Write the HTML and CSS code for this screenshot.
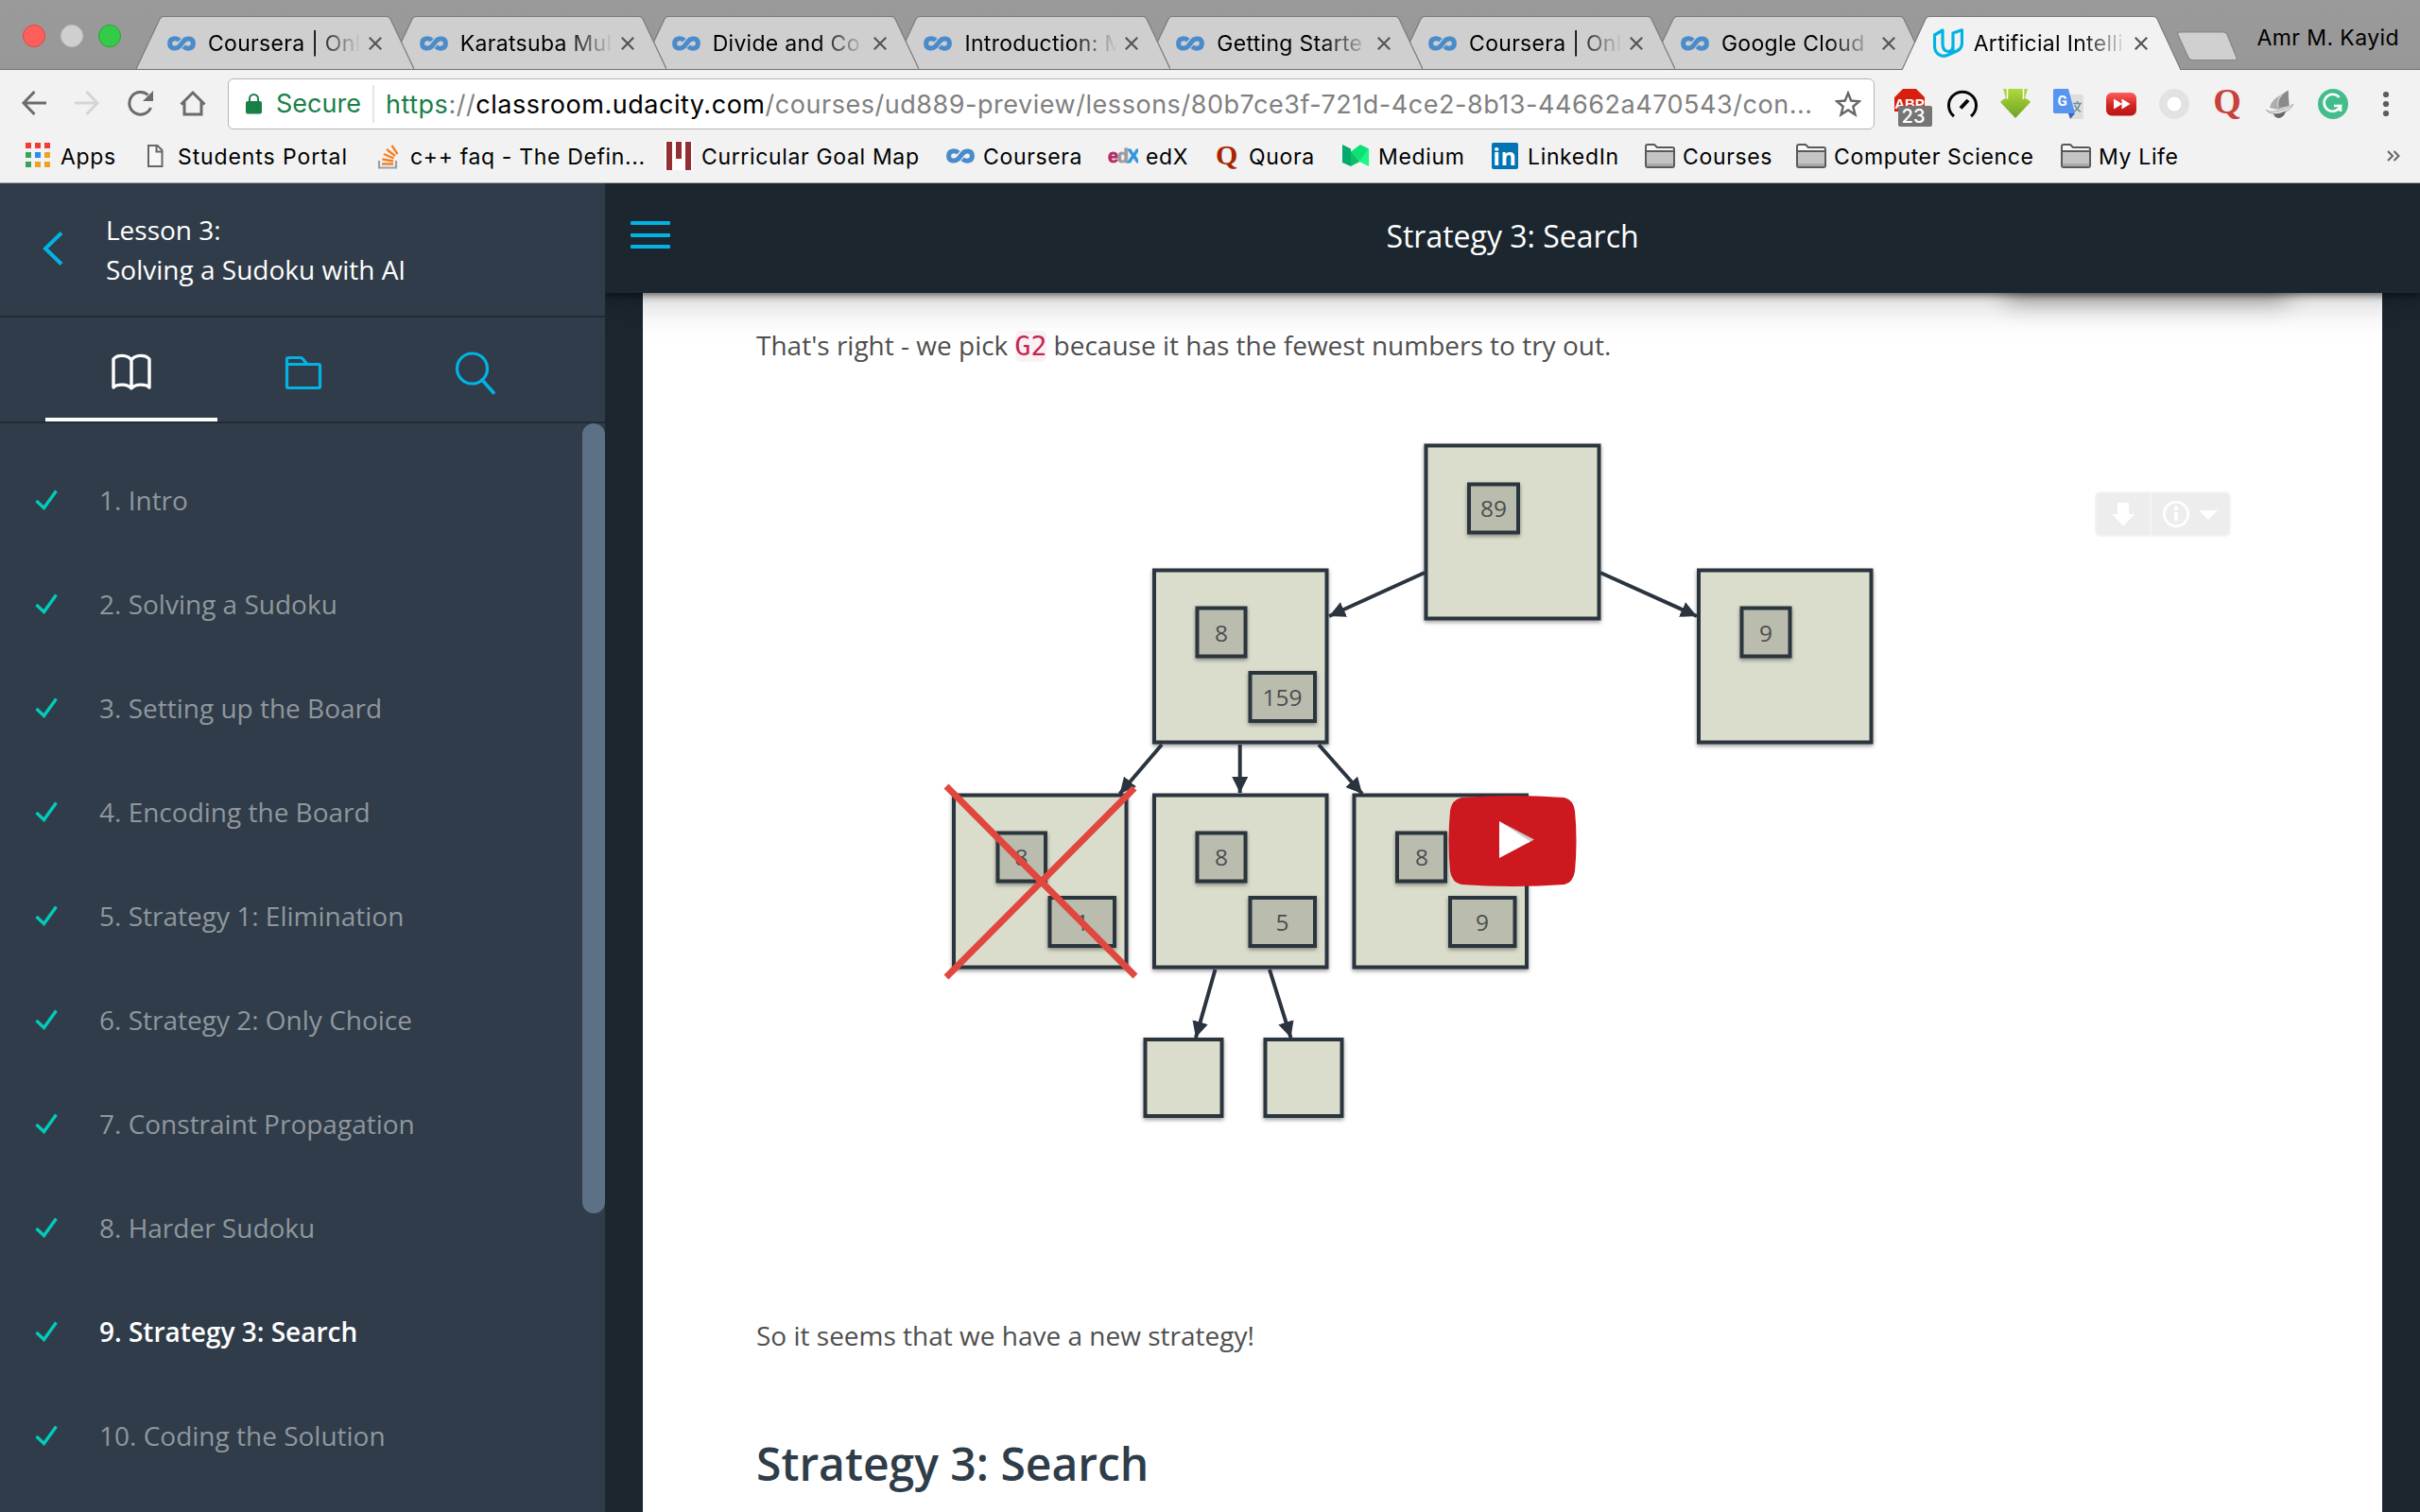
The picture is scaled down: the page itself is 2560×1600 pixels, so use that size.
FILE: index.html
```html
<!DOCTYPE html>
<html lang="en">
<head>
<meta charset="utf-8">
<title>Artificial Intelligence - Udacity</title>
<link rel="stylesheet" href="styles.css">
</head>
<body>
<svg class="defs" aria-hidden="true">
  <symbol id="tab-shape" viewBox="0 0 294 57"><path d="M0 56 L25 3 Q26.500 .5 29 .5 H265 Q267.500 .5 269 3 L294 56" fill="#cfcfcf" stroke="#7b7b7b" stroke-width="1.200"/></symbol>
  <symbol id="coursera" viewBox="0 0 30 16"><path d="M12.800 4.800C10.500 2.300 2.600 1.200 2.600 8S10 13.700 13 10.900L17.300 5.400C20 2.200 27.400 1.500 27.400 8S20 13.900 17.200 11.200" fill="none" stroke="#4a8ccb" stroke-width="5"/></symbol>
  <symbol id="close" viewBox="0 0 14 14"><path d="M.8 .8 13.200 13.200M13.200 .8 .8 13.200" stroke="#555" stroke-width="2.200" fill="none"/></symbol>
  <symbol id="folder" viewBox="0 0 32 26"><path d="M1 23V3Q1 1 3 1H10L13 4H29Q31 4 31 6V23Q31 25 29 25H3Q1 25 1 23Z" fill="#f7f7f7" stroke="#5a5a5a" stroke-width="2"/><path d="M2 9H30V24H2Z" fill="#c4c4c4"/><path d="M2 21H30V24H2Z" fill="#aaa"/><path d="M1 8H31" stroke="#5a5a5a" stroke-width="2"/></symbol>
  <symbol id="check" viewBox="0 0 24 22"><path d="M1.500 12 9.500 19.500 22.500 1.500" fill="none" stroke="#02ccba" stroke-width="3.400"/></symbol>
</svg>

<div class="browser">
  <div class="tabstrip">
    <div class="lights"><i class="light red"></i><i class="light gray"></i><i class="light green"></i></div>
    <div class="tabs">
      <div class="tab t1"><svg class="shape"><use href="#tab-shape"/></svg><svg class="fav"><use href="#coursera"/></svg><span class="tab-title">Coursera | Onl</span><svg class="x"><use href="#close"/></svg></div>
      <div class="tab t2"><svg class="shape"><use href="#tab-shape"/></svg><svg class="fav"><use href="#coursera"/></svg><span class="tab-title">Karatsuba Mul</span><svg class="x"><use href="#close"/></svg></div>
      <div class="tab t3"><svg class="shape"><use href="#tab-shape"/></svg><svg class="fav"><use href="#coursera"/></svg><span class="tab-title">Divide and Co</span><svg class="x"><use href="#close"/></svg></div>
      <div class="tab t4"><svg class="shape"><use href="#tab-shape"/></svg><svg class="fav"><use href="#coursera"/></svg><span class="tab-title">Introduction: M</span><svg class="x"><use href="#close"/></svg></div>
      <div class="tab t5"><svg class="shape"><use href="#tab-shape"/></svg><svg class="fav"><use href="#coursera"/></svg><span class="tab-title">Getting Starte</span><svg class="x"><use href="#close"/></svg></div>
      <div class="tab t6"><svg class="shape"><use href="#tab-shape"/></svg><svg class="fav"><use href="#coursera"/></svg><span class="tab-title">Coursera | Onl</span><svg class="x"><use href="#close"/></svg></div>
      <div class="tab t7"><svg class="shape"><use href="#tab-shape"/></svg><svg class="fav"><use href="#coursera"/></svg><span class="tab-title">Google Cloud</span><svg class="x"><use href="#close"/></svg></div>
      <div class="tab t8"><svg class="shape" viewBox="0 0 294 57"><path d="M0 57 L25 3 Q26.500 .5 29 .5 H266 Q268.500 .5 270 3 L295 57" fill="#f2f2f2" stroke="#7b7b7b" stroke-width="1.200"/></svg><svg class="fav udacity" viewBox="0 0 32 32"><path d="M1.500 7 10 2V16Q10 24.500 16 24.500C19 24.500 21 22 21 18V5L30.500 1.800V16Q30 22 25 24L16 28Q10 31 5 27Q1.500 24 1.500 19ZM21 18V26" fill="none" stroke="#01b3e3" stroke-width="3.200" stroke-linejoin="round"/></svg><span class="tab-title">Artificial Intelli</span><svg class="x"><use href="#close"/></svg></div>
    </div>
    <svg class="newtab" viewBox="0 0 66 32"><path d="M4 1H50Q52.500 1 54 3.500L64 28Q65 30.500 62.500 30.500H17Q14 30.500 13 28L2 4Q1 1 4 1Z" fill="#d0d0d0" stroke="#858585" stroke-width="1.200"/></svg>
    <span class="user">Amr M. Kayid</span>
  </div>

  <div class="toolbar">
    <div class="nav">
      <svg viewBox="0 0 28 28"><path d="M14.500 2 3 14 14.500 26M2.500 14H27" fill="none" stroke="#6b6b6b" stroke-width="3"/></svg>
      <svg viewBox="0 0 28 28"><path d="M13.500 2 25 14 13.500 26M25.500 14H1" fill="none" stroke="#d5d5d5" stroke-width="3"/></svg>
      <svg viewBox="0 0 28 28"><path d="M22.500 5.500A11.800 11.800 0 1 0 25.500 19" fill="none" stroke="#6b6b6b" stroke-width="3"/><path d="M28 1V12H17Z" fill="#6b6b6b"/></svg>
      <svg viewBox="0 0 28 28"><path d="M1.500 15.500 14 3 26.500 15.500M5 13V26H23V13" fill="none" stroke="#6b6b6b" stroke-width="3"/></svg>
    </div>
    <div class="address">
      <svg class="lock" viewBox="0 0 17 22"><rect y="8" width="17" height="13.500" rx="2" fill="#188046"/><path d="M4 9V5.500A4.500 4.500 0 0 1 13 5.500V9" fill="none" stroke="#188046" stroke-width="2"/></svg>
      <span class="secure">Secure</span>
      <span class="url"><span class="proto">https</span>://<span class="host">classroom.udacity.com</span>/courses/ud889-preview/lessons/80b7ce3f-721d-4ce2-8b13-44662a470543/con...</span>
      <svg class="star" viewBox="0 0 28 28"><path d="M14 2.500 17.200 10.500 26 11.200 19.300 16.800 21.500 25.300 14 20.500 6.500 25.300 8.700 16.800 2 11.200 10.800 10.500Z" fill="none" stroke="#666" stroke-width="2.400"/></svg>
    </div>
    <div class="extensions">
      <div class="abp"><svg viewBox="0 0 32 32"><path d="M9 0H23L32 9V18H4V24H0V9Z" fill="#d81e0d"/><text x="16" y="20.500" class="abp-text">ABP</text></svg><span class="badge">23</span></div>
      <svg viewBox="0 0 32 32"><path d="M7 29A14.500 14.500 0 1 1 25 29" fill="none" stroke="#050505" stroke-width="3"/><path d="M14 20.500 22 12" stroke="#050505" stroke-width="4"/></svg>
      <svg viewBox="0 0 32 32"><defs><linearGradient id="gr" x2="0" y2="1"><stop stop-color="#b0da3a"/><stop offset="1" stop-color="#70a127"/></linearGradient></defs><path d="M2 0H30L27 10L32 14L16 31L0 14L5 12Z" fill="url(#gr)"/><path d="M0 0H3L7 13H1ZM32 0H29L25 13H31Z" fill="#f2f2f2"/><path d="M7.500 0V11M24.500 0V11" stroke="#fff" stroke-width="1.500"/><path d="M0 13.500H8V11L5 10ZM32 13.500H24V11L27 10Z" fill="#98c52e"/></svg>
      <svg viewBox="0 0 32 32"><path d="M16 6H30Q32 6 32 8V32H18Z" fill="#dedede"/><path d="M16 26H23L18 32Z" fill="#3c61bd"/><path d="M1.500 0H16L23 26H1.500Q0 26 0 24V1.500Q0 0 1.500 0Z" fill="#5895f2"/><text x="9.500" y="18" class="g-text">G</text><path d="M21 15.500H30M25.500 13V16M28 16Q27 21 21.500 24.500M22.500 17Q25 22 29 24.500" fill="none" stroke="#72909c" stroke-width="1.600"/></svg>
      <svg viewBox="0 0 32 32"><defs><linearGradient id="rd" x2="0" y2="1"><stop stop-color="#fb605b"/><stop offset=".55" stop-color="#d32323"/><stop offset="1" stop-color="#b81414"/></linearGradient></defs><rect y="4" width="32" height="24.500" rx="6" fill="url(#rd)"/><path d="M8 10.500 17 16 8 21.500ZM16.500 10.500 25.500 16 16.500 21.500Z" fill="#fff"/></svg>
      <svg viewBox="0 0 32 32"><circle cx="16" cy="16" r="16" fill="#e2e2e2"/><circle cx="16" cy="16" r="7.500" fill="#fff"/></svg>
      <svg viewBox="0 0 32 32"><text x="16" y="26" class="q-big">Q</text></svg>
      <svg viewBox="0 0 32 32"><path d="M1 22Q4 26 15 23T30 16Q27 24 16 26T1 22Z" fill="#e4e4e4" stroke="#9a9a9a" stroke-width=".8"/><path d="M5 20Q7 11 16 7L24.500 1.500L25.500 18L14 22Z" fill="#adadad"/><path d="M14 20Q13 9 24.500 1.500L25.500 18Z" fill="#8a8a8a"/><path d="M14 20Q12.500 12 17 7" fill="none" stroke="#ddd"/><path d="M9 26.500Q16 27 22 23.500Q20 31 14 31Q10 30 9 26.500Z" fill="#666"/></svg>
      <svg viewBox="0 0 32 32"><circle cx="16" cy="16" r="16" fill="#43bd8c"/><path d="M22.500 9A9 9 0 1 0 24 18H17M24 17.500V24" fill="none" stroke="#fff" stroke-width="2.600"/></svg>
    </div>
    <svg class="menu-dots" viewBox="0 0 8 28"><g fill="#5c5c5c"><circle cx="4" cy="4" r="3.100"/><circle cx="4" cy="14" r="3.100"/><circle cx="4" cy="24" r="3.100"/></g></svg>
  </div>

  <div class="bookmarks">
    <div class="bm"><svg viewBox="0 0 32 32"><g><path d="M3 3h6v6h-6zM13 3h6v6h-6zM23 3h6v6h-6z" fill="#f43b37"/><path d="M3 13h6v6h-6zM3 23h6v6h-6z" fill="#3aa25a"/><path d="M13 13h6v6h-6z" fill="#2a8af6"/><path d="M23 13h6v6h-6zM13 23h6v6h-6zM23 23h6v6h-6z" fill="#f0a125"/></g></svg><span>Apps</span></div>
    <div class="bm wide"><svg viewBox="0 0 32 32"><path d="M9 6H18.500L23.500 11V28H9Z" fill="#f7f7f7" stroke="#666" stroke-width="2"/><path d="M17.500 6V12.500H23.500" fill="none" stroke="#666" stroke-width="2"/></svg><span>Students Portal</span></div>
    <div class="bm"><svg viewBox="0 0 32 32"><path d="M7 22V29.500H25V22" fill="none" stroke="#9c9fa4" stroke-width="2.200"/><path d="M10 25.500H22M10.500 20.500 22 22.500M12 15 22.500 19.500M15 10 24 17M20.500 6 26.500 15" stroke="#f48024" stroke-width="2.300"/></svg><span>c++ faq - The Defin...</span></div>
    <div class="bm"><svg viewBox="0 0 32 32"><path d="M1 1H31V32H1Z" fill="#fff"/><path d="M3 2h6v30h-6zM13 2h6v18h-6zM23 2h6v30h-6z" fill="#943034"/></svg><span>Curricular Goal Map</span></div>
    <div class="bm"><svg viewBox="0 0 32 32"><use href="#coursera" x="1" y="9" width="30" height="16"/></svg><span>Coursera</span></div>
    <div class="bm"><svg viewBox="0 0 32 32"><text y="24" class="edx-text"><tspan fill="#b52a67" stroke="#b52a67">e</tspan><tspan fill="#9b9b9b" stroke="#9b9b9b">d</tspan><tspan fill="#2f97dc" stroke="#2f97dc">X</tspan></text></svg><span>edX</span></div>
    <div class="bm"><svg viewBox="0 0 32 32"><text x="17" y="26" class="q-small">Q</text></svg><span>Quora</span></div>
    <div class="bm"><svg viewBox="0 0 32 32"><path d="M11 12 20.500 23 11 28Z" fill="#0cc067"/><path d="M21 5 30 9.500 20.500 23 11 12.500Z" fill="#0de074"/><path d="M30 9V28L20 23Z" fill="#18fa83"/><path d="M2 5 11 9.500V28L2 24Z" fill="#00ab6b"/></svg><span>Medium</span></div>
    <div class="bm"><svg viewBox="0 0 32 32"><rect x="2" y="3" width="28" height="28" rx="2" fill="#0374b3"/><text x="16" y="26.500" class="in-text">in</text></svg><span>LinkedIn</span></div>
    <div class="bm"><svg viewBox="0 -4 32 32"><use href="#folder" width="32" height="26"/></svg><span>Courses</span></div>
    <div class="bm"><svg viewBox="0 -4 32 32"><use href="#folder" width="32" height="26"/></svg><span>Computer Science</span></div>
    <div class="bm"><svg viewBox="0 -4 32 32"><use href="#folder" width="32" height="26"/></svg><span>My Life</span></div>
    <svg class="more" viewBox="0 0 14 12"><path d="M1 1 6 6 1 11M7.500 1 12.500 6 7.500 11" fill="none" stroke="#666" stroke-width="2"/></svg>
  </div>
</div>

<div class="app">
  <aside class="sidebar">
    <div class="lesson-head">
      <svg viewBox="0 0 22 36"><path d="M20 1.500 3 18 20 34.500" fill="none" stroke="#02b3e4" stroke-width="4"/></svg>
      <div class="lesson-title">Lesson 3:<br>Solving a Sudoku with AI</div>
    </div>
    <div class="side-tabs">
      <div class="side-tab active"><svg viewBox="0 0 46 46"><path d="M23 9C19 3 8 3 4 8V38C8 34 19 34 23 39C27 34 38 34 42 38V8C38 3 27 3 23 9ZM23 9V38" fill="none" stroke="#fff" stroke-width="3.400" stroke-linejoin="round"/></svg></div>
      <div class="side-tab"><svg viewBox="0 0 46 46"><path d="M5.500 14V8Q5.500 6.500 7 6.500H20Q21.500 6.500 22.500 8L27 13.500H39Q40.500 13.500 40.500 15V37Q40.500 38.500 39 38.500H7Q5.500 38.500 5.500 37V13.500H27" fill="none" stroke="#02b3e4" stroke-width="3.200"/></svg></div>
      <div class="side-tab"><svg viewBox="0 0 46 46"><circle cx="19.500" cy="18" r="16" fill="none" stroke="#02b3e4" stroke-width="3.200"/><path d="M30 30 42 43.500" stroke="#02b3e4" stroke-width="3.600" stroke-linecap="round"/></svg></div>
    </div>
    <div class="list-area">
      <ul class="concepts">
        <li><svg><use href="#check"/></svg>1. Intro</li>
        <li><svg><use href="#check"/></svg>2. Solving a Sudoku</li>
        <li><svg><use href="#check"/></svg>3. Setting up the Board</li>
        <li><svg><use href="#check"/></svg>4. Encoding the Board</li>
        <li><svg><use href="#check"/></svg>5. Strategy 1: Elimination</li>
        <li><svg><use href="#check"/></svg>6. Strategy 2: Only Choice</li>
        <li><svg><use href="#check"/></svg>7. Constraint Propagation</li>
        <li><svg><use href="#check"/></svg>8. Harder Sudoku</li>
        <li class="current"><svg><use href="#check"/></svg>9. Strategy 3: Search</li>
        <li><svg><use href="#check"/></svg>10. Coding the Solution</li>
      </ul>
      <div class="scroll-thumb"></div>
    </div>
  </aside>

  <main class="main">
    <header class="topbar">
      <div class="burger"><i></i><i></i><i></i></div>
      <h1>Strategy 3: Search</h1>
    </header>
    <div class="page">
      <div class="card-shadow"></div>
      <p class="intro">That's right - we pick <code>G2</code> because it has the fewest numbers to try out.</p>
      <div class="video">
        <svg class="tree" viewBox="800 439 1600 900">
          <defs>
            <filter id="soft" x="-10%" y="-10%" width="120%" height="125%"><feDropShadow dx="0" dy="2" stdDeviation="2" flood-color="#000" flood-opacity=".4"/></filter>
            <marker id="head" viewBox="0 0 16 16" refX="16" refY="8" markerWidth="17" markerHeight="17" markerUnits="userSpaceOnUse" orient="auto"><path d="M0 0 16 8 0 16Z" fill="#2a343e"/></marker>
          </defs>
          <g class="node">
            <rect x="1508.500" y="471.500" width="183" height="183"/>
            <rect x="1221" y="603.500" width="182.500" height="182"/>
            <rect x="1797" y="603.500" width="182.500" height="182"/>
            <rect x="1009" y="841.500" width="182.500" height="182"/>
            <rect x="1221" y="841.500" width="182.500" height="182"/>
            <rect x="1432.500" y="841.500" width="182.500" height="182"/>
            <rect x="1211.500" y="1100" width="81" height="81"/>
            <rect x="1338.500" y="1100" width="81" height="81"/>
          </g>
          <g class="cell">
            <rect x="1554" y="512.500" width="52" height="51"/>
            <rect x="1266.500" y="643.500" width="51" height="51"/>
            <rect x="1322.500" y="712" width="68.500" height="51"/>
            <rect x="1842.500" y="643.500" width="51" height="51"/>
            <rect x="1055.500" y="881.500" width="50.500" height="51"/>
            <rect x="1266.500" y="881.500" width="51" height="51"/>
            <rect x="1478" y="881.500" width="51" height="51"/>
            <rect x="1110.500" y="950" width="68.500" height="51"/>
            <rect x="1322.500" y="950" width="68.500" height="51"/>
            <rect x="1534" y="950" width="68.500" height="51"/>
          </g>
          <g class="digits">
            <text x="1580" y="547">89</text><text x="1292" y="678.500">8</text><text x="1356.500" y="747">159</text><text x="1868" y="678.500">9</text>
            <text x="1080.500" y="916">8</text><text x="1292" y="916">8</text><text x="1504" y="916">8</text>
            <text x="1145" y="984.500">1</text><text x="1356.500" y="984.500">5</text><text x="1568" y="984.500">9</text>
          </g>
          <g class="arrows">
            <path d="M1507 606 1406 652"/><path d="M1693 606 1795 652"/>
            <path d="M1229 788 1184.500 840"/><path d="M1311.700 788V839"/><path d="M1395 788 1441 840"/>
            <path d="M1285.500 1026 1265 1098"/><path d="M1343 1026 1365.500 1098"/>
          </g>
          <path d="M1001 832 1201 1033M1001 1034 1200 834" stroke="#e0473f" stroke-width="7"/>
          <path d="M1546 844Q1600 840 1655 844Q1664 846 1666 858Q1669 890 1666 922Q1664 934 1655 936Q1600 940 1546 936Q1536 934 1534 922Q1531 890 1534 858Q1536 846 1546 844Z" fill="#cc181e"/>
          <path d="M1586 869 1623 888.500 1616 892Z" fill="#c9c9c9"/><path d="M1586 869 1619 890.500 1586 908Z" fill="#fff"/>
        </svg>
        <div class="vid-tools">
          <svg viewBox="0 0 144 48"><rect x="1" y="1" width="142" height="46" rx="5" fill="#ededed" stroke="#f3f3f3" stroke-width="2"/><path d="M59 1V47" stroke="#f5f5f5" stroke-width="2"/><path d="M24 12H36V24H42.500L30 36.500 18 24H24Z" fill="#fff"/><circle cx="86" cy="24" r="12.700" fill="none" stroke="#fff" stroke-width="2.600"/><circle cx="86" cy="18" r="2.300" fill="#fff"/><path d="M84 22H88V31H84ZM110 20H130L120 30Z" fill="#fff"/></svg>
        </div>
      </div>
      <p class="outro">So it seems that we have a new strategy!</p>
      <h2>Strategy 3: Search</h2>
    </div>
  </main>
</div>
</body>
</html>
```
FILE: styles.css
```css
* { box-sizing: border-box; }
body { margin: 0; width: 2560px; height: 1600px; overflow: hidden; display: flex; flex-direction: column; font-family: "Open Sans", sans-serif; background: #1c262f; }
svg { display: block; flex: none; }
.defs { position: absolute; width: 0; height: 0; }

/* browser chrome */
.browser { flex: none; height: 194px; background: #f2f2f2; border-bottom: 1px solid #a8a8a8; font-family: Inter, "Liberation Sans", sans-serif; color: #000; }
.tabstrip { height: 74px; display: flex; align-items: flex-start; background: linear-gradient(#9a9a9a, #989898); border-bottom: 1px solid #707070; }
.lights { width: 144px; padding: 26px 0 0 24px; display: flex; gap: 16px; flex: none; }
.light { width: 24px; height: 24px; border-radius: 50%; border: 1px solid; }
.red { background: #fd605b; border-color: #df4744; }
.gray { background: #cfcfcf; border-color: #c0c0c0; }
.green { background: #35cb4a; border-color: #23a732; }
.tabs { display: flex; padding-top: 17px; flex: none; }
.tab { width: 294px; height: 56px; margin-right: -27.200px; position: relative; display: flex; align-items: center; padding: 0 0 0 33px; flex: none; }
.t1 { z-index: 7; } .t2 { z-index: 6; } .t3 { z-index: 5; } .t4 { z-index: 4; } .t5 { z-index: 3; } .t6 { z-index: 2; } .t7 { z-index: 1; } .t8 { z-index: 8; }
.shape { position: absolute; left: 0; top: 0; width: 294px; height: 57px; overflow: visible; }
.fav { width: 30px; height: 16px; position: relative; top: 1px; }
.udacity { width: 32px; height: 32px; margin-right: -2px; }
.tab-title { position: relative; margin: 2px 0 0 13px; width: 162px; overflow: hidden; white-space: nowrap; font-size: 23px; letter-spacing: .3px; line-height: 32px; -webkit-mask-image: linear-gradient(90deg, #000 112px, transparent 162px); mask-image: linear-gradient(90deg, #000 112px, transparent 162px); }
.x { width: 14px; height: 14px; position: relative; margin-left: 8px; top: 1px; }
.newtab { width: 66px; height: 32px; margin: 33px 0 0 23px; }
.user { margin: 24px 0 0 20px; font-size: 23px; letter-spacing: .4px; line-height: 32px; white-space: nowrap; }

.toolbar { height: 73px; padding-top: 9px; display: flex; align-items: flex-start; }
.nav { width: 241px; padding: 12px 0 0 22px; display: flex; gap: 28px; flex: none; }
.nav svg { width: 28px; height: 28px; }
.address { width: 1742px; height: 54px; flex: none; border: 1px solid #b4b4b4; border-radius: 6px; background: #fff; display: flex; align-items: center; padding-left: 18px; font-size: 27px; white-space: nowrap; }
.lock { width: 17px; height: 22px; }
.secure { color: #188046; margin-left: 15px; width: 104px; border-right: 2px solid #e6e6e6; line-height: 40px; }
.url { margin-left: 12px; width: 1524px; color: #808080; letter-spacing: .53px; padding-top: 1px; }
.proto { color: #188046; }
.host { color: #000; }
.star { width: 28px; height: 28px; margin-left: 9px; }
.extensions { display: flex; gap: 24px; padding: 11px 0 0 21px; flex: none; }
.extensions svg { width: 32px; height: 32px; }
.abp { position: relative; }
.badge { position: absolute; left: 4px; top: 18px; width: 36px; height: 22px; border-radius: 2px; background: #757575; color: #fff; font-size: 20px; line-height: 22px; text-align: center; padding-right: 4px; font-weight: 500; }
.abp-text { font: bold 15px "Liberation Sans", sans-serif; fill: #fff; text-anchor: middle; }
.g-text { font: bold 15px Roboto, sans-serif; fill: #fff; text-anchor: middle; }
.q-big { font: bold 38px "Liberation Serif", serif; fill: #c8413b; text-anchor: middle; }
.q-small { font: bold 30px "Liberation Serif", serif; fill: #a82400; text-anchor: middle; }
.edx-text { font: bold 20px "Liberation Sans", sans-serif; letter-spacing: -1.500px; stroke-width: .8px; }
.in-text { font: bold 25px "Open Sans", sans-serif; fill: #fff; text-anchor: middle; }
.menu-dots { width: 8px; height: 28px; margin: 13px 0 0 36px; }

.bookmarks { height: 46px; padding: 1px 22px 0 24px; display: grid; grid-template-columns: 124px 246px 308px 298px 172px 109px 137px 158px 164px 160px 280px 345px 14px; font-size: 23px; letter-spacing: .65px; line-height: 36px; }
.bm { display: flex; gap: 8px; white-space: nowrap; }
.bm.wide { letter-spacing: .9px; }
.bm svg { width: 32px; height: 32px; }
.more { width: 14px; height: 12px; margin-top: 11px; }

/* classroom */
.app { flex: none; height: 1406px; display: flex; }
.sidebar { width: 640px; flex: none; background: #303c49; display: flex; flex-direction: column; }
.lesson-head { height: 142px; flex: none; border-bottom: 2px solid #222b36; display: flex; align-items: flex-start; }
.lesson-head svg { width: 22px; height: 36px; margin: 51px 45px 0 45px; }
.lesson-title { margin-top: 28px; font-size: 28px; line-height: 42px; color: #fff; white-space: nowrap; }
.side-tabs { height: 112px; flex: none; border-bottom: 2px solid #222b36; display: flex; padding-left: 48px; }
.side-tab { width: 182px; display: flex; justify-content: center; padding-top: 36px; }
.side-tab.active { border-bottom: 4px solid #fff; }
.side-tab svg { width: 46px; height: 46px; }
.list-area { flex: 1; display: flex; overflow: hidden; }
.concepts { list-style: none; margin: 0; padding: 26px 0 0 37px; width: 616px; flex: none; }
.concepts li { height: 110px; display: flex; align-items: center; gap: 44px; color: #8f979e; font-size: 28px; white-space: nowrap; }
.concepts svg { width: 24px; height: 22px; }
.concepts .current { color: #fff; font-weight: 600; }
.scroll-thumb { width: 24px; height: 836px; border-radius: 12px; background: #5d7186; }

.main { flex: 1; display: flex; flex-direction: column; overflow: hidden; }
.topbar { height: 116px; flex: none; position: relative; z-index: 2; background: #1c262f; box-shadow: 0 2px 8px rgba(0,0,0,.6), 0 8px 40px rgba(0,0,0,.22); display: flex; align-items: flex-start; }
.burger { width: 69px; padding: 40px 0 0 27px; display: flex; flex-direction: column; gap: 8.500px; flex: none; }
.burger i { width: 42px; height: 4px; border-radius: 1px; background: #02b3e4; }
.topbar h1 { margin: 35px 69px 0 0; flex: 1; text-align: center; font-size: 32px; line-height: 42px; font-weight: 400; color: #fff; }
.page { flex: 1; margin: 0 40px; padding: 0 120px; background: #fff; position: relative; color: #4f4f4f; font-size: 28px; line-height: 42px; }
.card-shadow { position: absolute; left: 1446px; top: -46px; width: 290px; height: 44px; box-shadow: 0 8px 26px 4px rgba(0,0,0,.3); }
.page p { margin: 0; white-space: nowrap; }
.page .intro { padding-top: 34px; height: 129px; }
code { font-family: "DejaVu Sans Mono", monospace; font-size: 28px; color: #c7254e; background: #f9f2f4; border-radius: 6px; }
.video { width: 1600px; height: 900px; position: relative; }
.tree { width: 1600px; height: 900px; }
.node rect { fill: #dbddcc; stroke: #2a343e; stroke-width: 4; filter: url(#soft); }
.cell rect { fill: #babcae; stroke: #2a343e; stroke-width: 4; filter: url(#soft); }
.digits text { font: 24.500px "Open Sans", sans-serif; fill: #4a4e4e; text-anchor: middle; }
.arrows path { fill: none; stroke: #2a343e; stroke-width: 4; marker-end: url(#head); }
.vid-tools { position: absolute; left: 1416px; top: 81px; }
.vid-tools svg { width: 144px; height: 48px; }
.page .outro { padding-top: 53px; height: 172px; }
h2 { margin: 0; padding-top: 6px; font-size: 48px; line-height: 64px; font-weight: 600; color: #2e3d49; white-space: nowrap; }
```
